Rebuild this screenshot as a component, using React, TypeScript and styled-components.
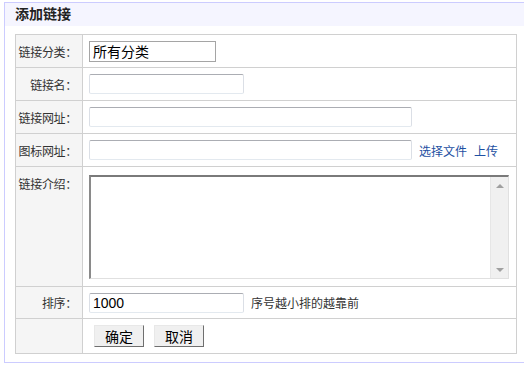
import styled, { createGlobalStyle } from "styled-components";

const GlobalStyle = createGlobalStyle`
  html, body {
    margin: 0;
    padding: 0;
    background: #fff;
    overflow: hidden;
  }
  body {
    font-family: "Liberation Sans", Arial, "Noto Sans CJK SC", sans-serif;
    font-size: 12px;
    color: #333;
  }
`;

const Panel = styled.div`
  margin: 2px 0 0 4px;
  width: 530px;
  border: 1px solid #ccccff;
  background: #fff;
`;

const Header = styled.div`
  height: 23px;
  background: #f5f5ff;
  padding-left: 10px;
`;

const Title = styled.h3`
  margin: 0;
  font-size: 14px;
  line-height: 23px;
  font-weight: bold;
  color: #222;
`;

const Body = styled.div`
  padding: 8px 0 8px 10px;
`;

const Table = styled.table`
  width: 502px;
  border-collapse: collapse;
  border: 1px solid #d0d0d0;
`;

const Label = styled.td<{ top?: boolean }>`
  width: 61px;
  padding: ${(p) => (p.top ? "8px 5px 0 0" : "0 5px 0 0")};
  background: #f5f5f5;
  border: 1px solid #d0d0d0;
  text-align: right;
  vertical-align: ${(p) => (p.top ? "top" : "middle")};
  color: #333;
  white-space: nowrap;
  letter-spacing: -0.3px;
`;

const Field = styled.td<{ h: number }>`
  height: ${(p) => p.h}px;
  padding: 0 0 0 6px;
  border: 1px solid #d0d0d0;
  vertical-align: middle;
`;

const Line = styled.div`
  display: flex;
  align-items: center;
`;

const ButtonRow = styled.div`
  display: flex;
  align-items: center;
  gap: 10px;
  padding-left: 5px;
`;

const TextInput = styled.input<{ w: number }>`
  box-sizing: border-box;
  width: ${(p) => p.w}px;
  height: 20px;
  margin: 0;
  padding: 0 3px;
  border: 1px solid #e3e9ef;
  border-top-color: #abadb3;
  border-left-color: #dbdfe6;
  border-right-color: #dbdfe6;
  border-radius: 2px;
  font-family: "Liberation Sans", Arial, "Noto Sans CJK SC", sans-serif;
  font-size: 14px;
  color: #000;
  background: #fff;
  outline: none;
`;

const CategoryInput = styled(TextInput)`
  height: 21px;
  border: 1px solid #a5a5a5;
  border-radius: 0;
`;

const Hint = styled.span`
  margin-left: 7px;
  color: #333;
`;

const Link = styled.a`
  margin-left: 7px;
  color: #1e50a2;
  text-decoration: none;
  cursor: pointer;
`;

const AreaBox = styled.div`
  display: flex;
  box-sizing: border-box;
  width: 420px;
  height: 104px;
  border-style: solid;
  border-width: 2px 1px 1px 2px;
  border-color: #7a7a7a #e0e0e0 #e0e0e0 #8a8a8a;
  background: #fff;
`;

const Area = styled.textarea`
  flex: 1;
  border: none;
  margin: 0;
  padding: 2px;
  resize: none;
  outline: none;
  font-family: "Liberation Sans", Arial, "Noto Sans CJK SC", sans-serif;
  font-size: 12px;
`;

const ScrollTrack = styled.div`
  width: 17px;
  background: #f0f0f0;
  border-left: 1px solid #e6e6e6;
  display: flex;
  flex-direction: column;
  justify-content: space-between;
  align-items: center;
  padding: 7px 0 6px;
`;

const Arrow = styled.div<{ down?: boolean }>`
  width: 0;
  height: 0;
  border-left: 4px solid transparent;
  border-right: 4px solid transparent;
  ${(p) =>
    p.down ? "border-top: 4px solid #a0a0a0;" : "border-bottom: 4px solid #a0a0a0;"}
`;

const Button = styled.button`
  box-sizing: border-box;
  width: 50px;
  height: 22px;
  margin: 0;
  padding: 0;
  background: #f0f0f0;
  border-style: solid;
  border-width: 1px;
  border-color: #e8e8e8 #6f6f6f #6f6f6f #e8e8e8;
  font-family: "Noto Sans CJK SC", sans-serif;
  font-size: 14px;
  line-height: 20px;
  color: #000;
  cursor: pointer;
`;

const App = () => {
  return (
    <>
      <GlobalStyle />
      <Panel>
        <Header>
          <Title>添加链接</Title>
        </Header>
        <Body>
          <Table>
            <tbody>
              <tr>
                <Label>链接分类：</Label>
                <Field h={32}>
                  <CategoryInput w={127} defaultValue="所有分类" />
                </Field>
              </tr>
              <tr>
                <Label>链接名：</Label>
                <Field h={32}>
                  <TextInput w={155} />
                </Field>
              </tr>
              <tr>
                <Label>链接网址：</Label>
                <Field h={32}>
                  <TextInput w={323} />
                </Field>
              </tr>
              <tr>
                <Label>图标网址：</Label>
                <Field h={32}>
                  <Line>
                    <TextInput w={323} />
                    <Link>选择文件</Link>
                    <Link>上传</Link>
                  </Line>
                </Field>
              </tr>
              <tr>
                <Label top>链接介绍：</Label>
                <Field h={119}>
                  <AreaBox>
                    <Area />
                    <ScrollTrack>
                      <Arrow />
                      <Arrow down />
                    </ScrollTrack>
                  </AreaBox>
                </Field>
              </tr>
              <tr>
                <Label>排序：</Label>
                <Field h={31}>
                  <Line>
                    <TextInput w={155} defaultValue="1000" />
                    <Hint>序号越小排的越靠前</Hint>
                  </Line>
                </Field>
              </tr>
              <tr>
                <Label />
                <Field h={34}>
                  <ButtonRow>
                    <Button>确定</Button>
                    <Button>取消</Button>
                  </ButtonRow>
                </Field>
              </tr>
            </tbody>
          </Table>
        </Body>
      </Panel>
    </>
  );
};

export default App;
